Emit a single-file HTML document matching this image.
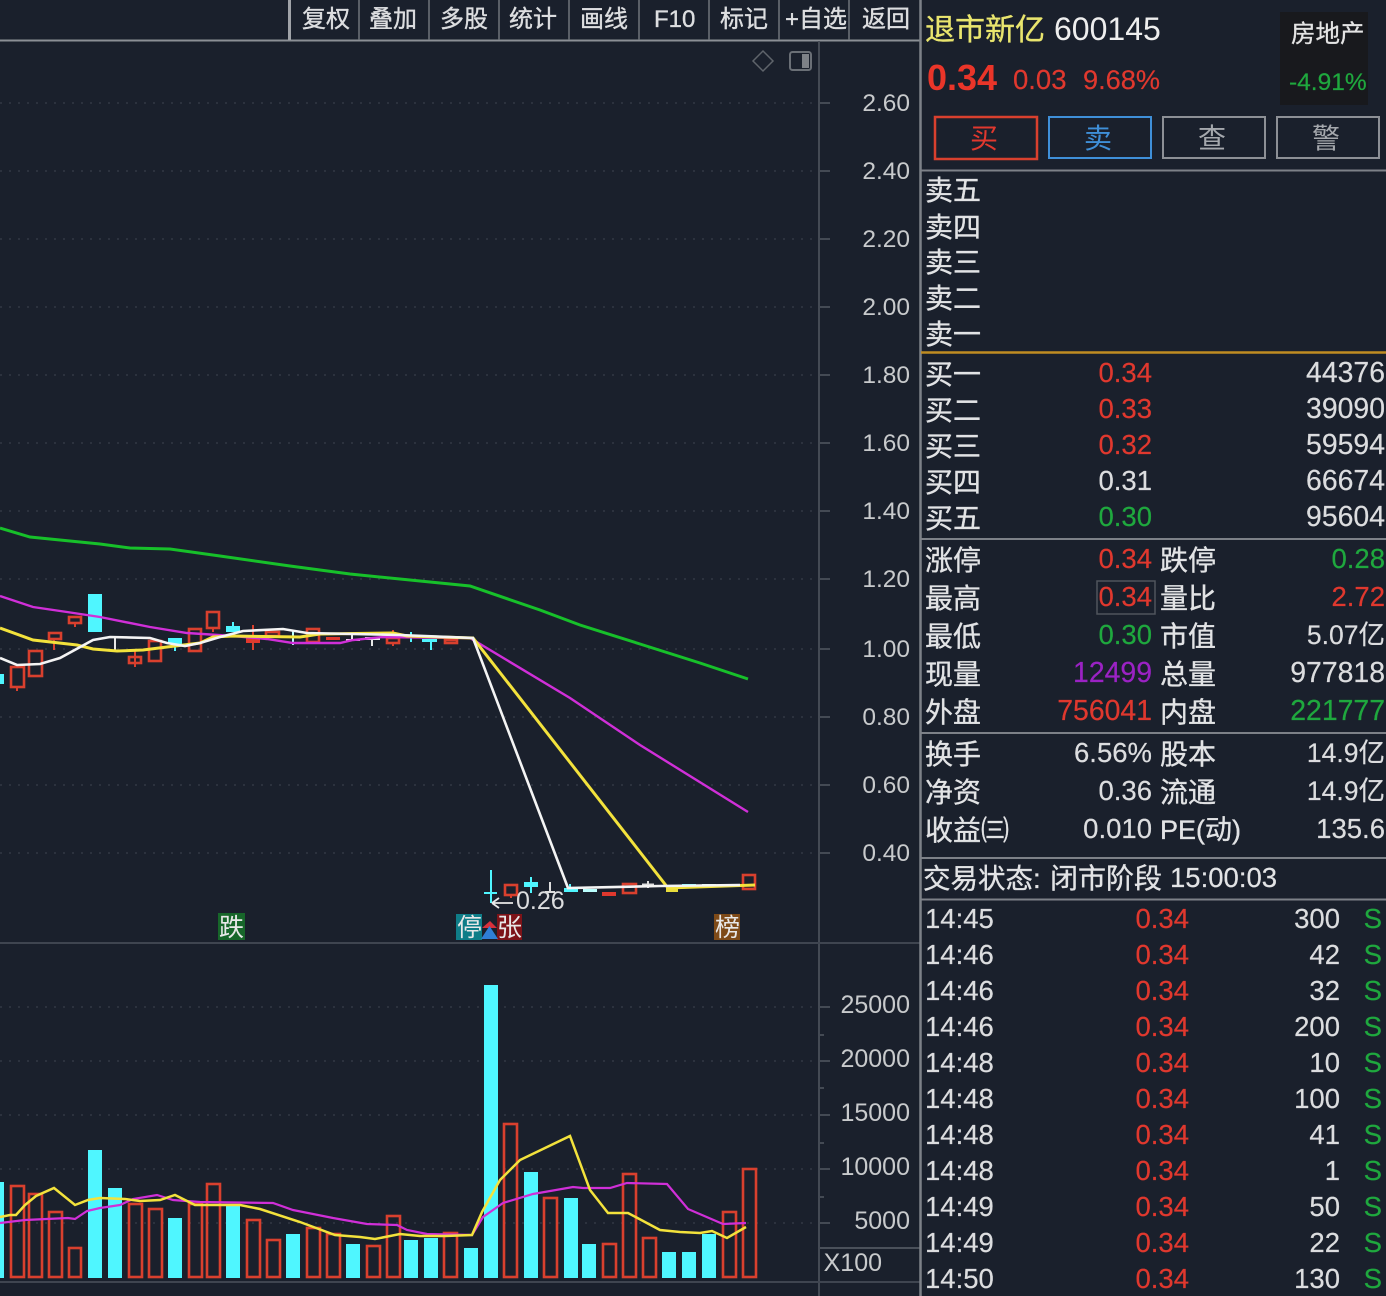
<!DOCTYPE html>
<html><head><meta charset="utf-8">
<style>
html,body{margin:0;padding:0;background:#1a202c;width:1386px;height:1296px;overflow:hidden}
svg{display:block}
text{font-family:"Liberation Sans","Noto Sans CJK SC",sans-serif;fill:#dcdddf}
.t{font-size:24px;stroke:#e4e5e7;stroke-width:.35}
.ax{font-size:24.5px;fill:#c8cacc;text-anchor:end}
.l{font-size:28px;fill:#e2e3e5;stroke:#e2e3e5;stroke-width:.35}
.n{font-size:27.5px;text-anchor:end;fill:#dcdddf;stroke:#dcdddf;stroke-width:.2}
.w{font-size:28.4px}
.r{fill:#e0382e;stroke:#e0382e;stroke-width:.2}
.g{fill:#1fa83e;stroke:#1fa83e;stroke-width:.2}
.c{text-anchor:middle}
.grid{stroke:#333944;stroke-width:1.5;stroke-dasharray:2 7;fill:none}
.tick{stroke:#444a54;stroke-width:2;fill:none}
.vr{fill:none;stroke:#d9402e;stroke-width:2.6}
.vc{fill:#4ff6ff}
.cr{fill:none;stroke:#d9402e;stroke-width:2.6}
.wk{stroke:#d9402e;stroke-width:2}
.wc{stroke:#4ff6ff;stroke-width:2}
.ww{stroke:#e8e8e8;stroke-width:2}
</style></head>
<body>
<svg width="1386" height="1296" viewBox="0 0 1386 1296" xmlns="http://www.w3.org/2000/svg">
<rect width="1386" height="1296" fill="#1a202c"/>

<!-- toolbar -->
<path d="M0 40.500H920" stroke="#8b8f95" stroke-width="2"/>
<path d="M289.500 0V40" stroke="#a0a3a8" stroke-width="3"/>
<path d="M359 0V40M429 0V40M499 0V40M569 0V40M639 0V40M709 0V40M779 0V40M849 0V40" stroke="#6f747b" stroke-width="1.500"/>
<text class="t" x="302" y="27">复权</text>
<text class="t" x="369" y="27">叠加</text>
<text class="t" x="440" y="27">多股</text>
<text class="t" x="509" y="27">统计</text>
<text class="t" x="580" y="27">画线</text>
<text class="t" x="654" y="27">F10</text>
<text class="t" x="720" y="27">标记</text>
<text class="t" x="785" y="27">+自选</text>
<text class="t" x="862" y="27">返回</text>

<!-- chart icons -->
<path d="M763 51L773 61L763 71L753 61Z" fill="none" stroke="#5f646b" stroke-width="1.500"/>
<rect x="790" y="52" width="21" height="18" rx="2.500" fill="none" stroke="#6a6f76" stroke-width="2"/>
<rect x="802" y="54" width="7" height="14" fill="#7d8187"/>

<!-- axis frame -->
<path d="M819 41V1296" stroke="#444a54" stroke-width="2"/>
<path d="M0 943H920" stroke="#3f4550" stroke-width="2"/>
<path d="M0 1282H920" stroke="#3f4550" stroke-width="2"/>
<path d="M820 1248H920" stroke="#4a505a" stroke-width="2"/>
<path d="M920.500 0V1296" stroke="#7d8188" stroke-width="2.500"/>

<!-- price grid -->
<path class="grid" d="M0 103H818M0 171H818M0 239H818M0 307H818M0 375H818M0 443H818M0 511H818M0 579H818M0 649H818M0 717H818M0 785H818M0 853H818"/>
<path class="tick" d="M820 103H830M820 171H830M820 239H830M820 307H830M820 375H830M820 443H830M820 511H830M820 579H830M820 649H830M820 717H830M820 785H830M820 853H830"/>
<text class="ax" x="910" y="111">2.60</text>
<text class="ax" x="910" y="179">2.40</text>
<text class="ax" x="910" y="247">2.20</text>
<text class="ax" x="910" y="315">2.00</text>
<text class="ax" x="910" y="383">1.80</text>
<text class="ax" x="910" y="451">1.60</text>
<text class="ax" x="910" y="519">1.40</text>
<text class="ax" x="910" y="587">1.20</text>
<text class="ax" x="910" y="657">1.00</text>
<text class="ax" x="910" y="725">0.80</text>
<text class="ax" x="910" y="793">0.60</text>
<text class="ax" x="910" y="861">0.40</text>

<!-- candles -->
<rect x="0" y="674" width="4" height="10" class="vc"/>
<rect x="11" y="667" width="13" height="20" class="cr"/><path class="wk" d="M17 687V691"/>
<rect x="29" y="651" width="13" height="25" class="cr"/>
<rect x="49" y="633" width="12" height="6" class="cr"/><path class="wk" d="M54 639V650"/>
<rect x="69" y="617" width="12" height="6" class="cr"/><path class="wk" d="M75 623V627"/>
<rect x="88" y="594" width="14" height="38" class="vc"/>
<path class="ww" d="M115 637V650"/>
<rect x="129" y="657" width="12" height="6" class="cr"/><path class="wk" d="M135 649V667"/>
<rect x="149" y="641" width="12" height="20" class="cr"/>
<rect x="168" y="638" width="14" height="6" class="vc"/><path class="wc" d="M175 644V651"/>
<rect x="189" y="629" width="12" height="22" class="cr"/>
<rect x="207" y="612" width="12" height="16" class="cr"/><path class="wk" d="M213 628V632"/>
<rect x="226" y="626" width="14" height="6" class="vc"/><path class="wc" d="M233 622V626"/>
<rect x="246" y="637" width="14" height="6" fill="#e0382e"/><path class="wk" d="M253 625V650"/>
<rect x="266" y="632" width="13" height="4" class="cr"/>
<path d="M293 630V645" stroke="#bff" stroke-width="2"/>
<rect x="307" y="629" width="12" height="13" class="cr"/>
<rect x="326" y="637" width="14" height="3" fill="#e0382e"/>
<rect x="346" y="639" width="14" height="2" fill="#f0c8f0"/><path class="ww" d="M352 635V640"/>
<rect x="365" y="637" width="15" height="3" fill="#eee"/><path class="ww" d="M372 640V646"/>
<rect x="387" y="638" width="12" height="5" class="cr"/><path class="wk" d="M393 643V646M393 630V638"/>
<path class="wc" d="M411 632V642"/>
<rect x="422" y="639" width="15" height="3" class="vc"/><path class="wc" d="M431 642V650"/>
<rect x="445" y="640" width="12" height="3" class="cr"/>

<rect x="505" y="885" width="12" height="10" class="cr"/><path class="wk" d="M511 895V898"/>
<rect x="524" y="882" width="14" height="5" class="vc"/><path class="wc" d="M531 877V893"/>
<path d="M491 870V903M484 893H497" stroke="#4ff6ff" stroke-width="2" fill="none"/>
<path d="M550 882V893M545 892H555" stroke="#ddd" stroke-width="2" fill="none"/>
<rect x="564" y="888" width="14" height="4" class="vc"/><path class="wc" d="M570 884V892"/>
<rect x="583" y="889" width="14" height="3" fill="#bff"/>
<rect x="602" y="892" width="14" height="4" fill="#e0382e"/>
<rect x="623" y="884" width="13" height="9" class="cr"/>
<path d="M642 884.500H654M648 881V888" stroke="#ddd" stroke-width="2" fill="none"/>
<rect x="666" y="888" width="12" height="4" fill="#e8dc3c"/>
<rect x="682" y="884" width="14" height="4" class="vc"/>
<rect x="702" y="884" width="14" height="3" fill="#bff"/>
<rect x="722" y="884" width="14" height="3" fill="#e0382e"/>
<rect x="743" y="875" width="12" height="14" class="cr"/>
<path d="M739 885H749" stroke="#eee" stroke-width="2"/>

<!-- price MAs -->
<polyline fill="none" stroke="#17c02a" stroke-width="3" points="0,528 30,537 100,544 130,548 170,549 220,556 290,566 350,574 410,580 470,586 540,610 580,625 640,644 700,663 748,679"/>
<polyline fill="none" stroke="#d02fd8" stroke-width="2.400" points="0,596 33,607 67,612 100,617 150,627 187,633 233,636 267,639 293,643 340,643 353,640 383,637 470,638 570,698 640,745 748,812"/>
<polyline fill="none" stroke="#f3e23c" stroke-width="3" points="0,628 33,640 77,645 93,649 117,651 143,650 167,647 200,643 213,637 233,636 300,637 320,634 393,633 407,636 473,638 668,888 755,885"/>
<polyline fill="none" stroke="#f4f4f4" stroke-width="2.600" points="0,658 17,665 40,664 60,658 93,640 110,637 150,638 167,643 185,646 200,643 220,637 243,631 283,629 307,633 400,635 473,638 568,888 660,886 740,885"/>

<!-- price annotation -->
<path d="M513 903H492M492 903L499 898M492 903L499 908" stroke="#e8e8e8" stroke-width="1.800" fill="none"/>
<text x="516" y="909" font-size="25" style="fill:#dcdddf">0.26</text>

<!-- markers -->
<rect x="218" y="913" width="27" height="27" fill="#17662a"/>
<text x="219" y="936" font-size="25" style="fill:#e8e8e8">跌</text>
<rect x="456" y="914" width="26" height="26" fill="#0f7d88"/>
<text x="457" y="936" font-size="25" style="fill:#e8e8e8">停</text>
<rect x="497" y="914" width="25" height="26" fill="#7d1318"/>
<text x="497" y="936" font-size="25" style="fill:#e8e8e8">张</text>
<path d="M490 921L497 928H482Z" fill="#d9303a"/>
<path d="M489.500 926L498 939H481Z" fill="#2f7fd6"/>
<rect x="714" y="914" width="26" height="26" fill="#7e4a18"/>
<text x="715" y="936" font-size="25" style="fill:#e8e8e8">榜</text>

<!-- volume grid -->
<path class="grid" d="M0 1007H818M0 1061H818M0 1115H818M0 1169H818M0 1223H818"/>
<path class="tick" d="M820 1007H830M820 1061H830M820 1115H830M820 1169H830M820 1223H830"/>
<path d="M820 1035H824M820 1088H824M820 1143H824M820 1197H824" stroke="#444a54" stroke-width="2"/>
<text class="ax" x="910" y="1013" style="font-size:25px">25000</text>
<text class="ax" x="910" y="1067" style="font-size:25px">20000</text>
<text class="ax" x="910" y="1121" style="font-size:25px">15000</text>
<text class="ax" x="910" y="1175" style="font-size:25px">10000</text>
<text class="ax" x="910" y="1229" style="font-size:25px">5000</text>
<text class="ax" x="882" y="1271" style="font-size:25px">X100</text>

<!-- volume bars -->
<rect class="vc" x="0" y="1182" width="4" height="96"/>
<rect class="vr" x="11" y="1186" width="13" height="91"/>
<rect class="vr" x="29" y="1194" width="13" height="83"/>
<rect class="vr" x="49" y="1212" width="13" height="65"/>
<rect class="vr" x="69" y="1248" width="12" height="29"/>
<rect class="vc" x="88" y="1150" width="14" height="128"/>
<rect class="vc" x="108" y="1188" width="14" height="90"/>
<rect class="vr" x="129" y="1204" width="13" height="73"/>
<rect class="vr" x="149" y="1209" width="13" height="68"/>
<rect class="vc" x="168" y="1218" width="14" height="60"/>
<rect class="vr" x="189" y="1204" width="13" height="73"/>
<rect class="vr" x="207" y="1184" width="13" height="93"/>
<rect class="vc" x="226" y="1205" width="14" height="73"/>
<rect class="vr" x="247" y="1220" width="13" height="57"/>
<rect class="vr" x="267" y="1240" width="13" height="37"/>
<rect class="vc" x="286" y="1234" width="14" height="44"/>
<rect class="vr" x="307" y="1228" width="13" height="49"/>
<rect class="vr" x="327" y="1234" width="13" height="43"/>
<rect class="vc" x="346" y="1244" width="14" height="34"/>
<rect class="vr" x="367" y="1246" width="13" height="31"/>
<rect class="vr" x="387" y="1216" width="13" height="61"/>
<rect class="vc" x="404" y="1240" width="14" height="38"/>
<rect class="vc" x="424" y="1238" width="14" height="40"/>
<rect class="vr" x="444" y="1233" width="13" height="44"/>
<rect class="vc" x="464" y="1248" width="14" height="30"/>
<rect class="vc" x="484" y="985" width="14" height="293"/>
<rect class="vr" x="504" y="1124" width="13" height="153"/>
<rect class="vc" x="524" y="1172" width="14" height="106"/>
<rect class="vr" x="544" y="1198" width="13" height="79"/>
<rect class="vc" x="564" y="1198" width="14" height="80"/>
<rect class="vc" x="582" y="1244" width="14" height="34"/>
<rect class="vr" x="603" y="1244" width="13" height="33"/>
<rect class="vr" x="623" y="1174" width="13" height="103"/>
<rect class="vr" x="643" y="1238" width="13" height="39"/>
<rect class="vc" x="662" y="1252" width="14" height="26"/>
<rect class="vc" x="682" y="1252" width="14" height="26"/>
<rect class="vc" x="702" y="1234" width="14" height="44"/>
<rect class="vr" x="723" y="1212" width="13" height="65"/>
<rect class="vr" x="743" y="1169" width="13" height="108"/>
<polyline fill="none" stroke="#d02fd8" stroke-width="2.200" points="0,1223 25,1220 68,1218 75,1219 87,1211 100,1208 120,1205 133,1199 157,1195 173,1200 200,1202 273,1203 293,1210 333,1218 367,1224 397,1225 407,1230 427,1234 472,1235 483,1217 503,1203 533,1194 573,1187 583,1188 610,1188 627,1183 667,1184 688,1209 723,1224 746,1223"/>
<polyline fill="none" stroke="#f3e23c" stroke-width="2.500" points="0,1217 10,1215 16,1215 25,1205 36,1196 54,1188 75,1205 88,1200 100,1198 125,1199 140,1201 160,1200 175,1195 195,1205 240,1205 260,1209 300,1222 335,1235 360,1237 375,1239 400,1234 420,1236 445,1236 472,1235 482,1212 500,1180 520,1160 545,1148 570,1136 590,1190 608,1213 628,1213 660,1230 680,1232 700,1233 712,1231 727,1238 746,1227"/>

<!-- right panel header -->
<text x="925" y="40" font-size="30" style="fill:#e9e56e;stroke:#e9e56e;stroke-width:.35">退市新亿</text>
<text x="1054" y="40" font-size="32" style="fill:#eeeeee">600145</text>
<text x="927" y="90" font-size="36" font-weight="bold" style="fill:#ea3529">0.34</text>
<text x="1013" y="89" font-size="27.500" class="r">0.03</text>
<text x="1083" y="89" font-size="27.200" class="r">9.68%</text>
<rect x="1280" y="12" width="88" height="93" fill="#18191d"/>
<text x="1291" y="42" font-size="24.500" style="fill:#e4e4e4;stroke:#e4e4e4;stroke-width:.3">房地产</text>
<text x="1289" y="90" font-size="24.500" class="g">-4.91%</text>

<rect x="935" y="117" width="102" height="42" fill="none" stroke="#d9402e" stroke-width="2.500"/>
<rect x="1049" y="117" width="102" height="41" fill="none" stroke="#3f8fd8" stroke-width="2"/>
<rect x="1163" y="117" width="102" height="41" fill="none" stroke="#8d9096" stroke-width="2"/>
<rect x="1277" y="117" width="102" height="41" fill="none" stroke="#8d9096" stroke-width="2"/>
<text x="984" y="148" font-size="28" class="c" style="fill:#e0382e">买</text>
<text x="1098" y="148" font-size="28" class="c" style="fill:#3f8fd8">卖</text>
<text x="1212" y="148" font-size="28" class="c" style="fill:#a5a8ad">查</text>
<text x="1326" y="148" font-size="28" class="c" style="fill:#a5a8ad">警</text>

<path d="M921 170.500H1386M921 539H1386M921 733H1386M921 858H1386M921 899.500H1386" stroke="#7d8188" stroke-width="2"/>
<path d="M921 352.500H1386" stroke="#c08c22" stroke-width="2.500"/>

<!-- sell -->
<text class="l" x="925" y="200">卖五</text>
<text class="l" x="925" y="237">卖四</text>
<text class="l" x="925" y="272">卖三</text>
<text class="l" x="925" y="308">卖二</text>
<text class="l" x="925" y="344">卖一</text>

<!-- buy -->
<text class="l" x="925" y="384">买一</text><text class="n r" x="1152" y="382">0.34</text><text class="n w" x="1385" y="382">44376</text>
<text class="l" x="925" y="420">买二</text><text class="n r" x="1152" y="418">0.33</text><text class="n w" x="1385" y="418">39090</text>
<text class="l" x="925" y="456">买三</text><text class="n r" x="1152" y="454">0.32</text><text class="n w" x="1385" y="454">59594</text>
<text class="l" x="925" y="492">买四</text><text class="n" x="1152" y="490">0.31</text><text class="n w" x="1385" y="490">66674</text>
<text class="l" x="925" y="528">买五</text><text class="n g" x="1152" y="526">0.30</text><text class="n w" x="1385" y="526">95604</text>

<!-- stats -->
<text class="l" x="925" y="570">涨停</text><text class="n r" x="1152" y="568">0.34</text><text class="l" x="1160" y="570">跌停</text><text class="n g" x="1385" y="568">0.28</text>
<rect x="1097" y="581" width="58" height="33" fill="none" stroke="#4f545c" stroke-width="1.500"/>
<text class="l" x="925" y="608">最高</text><text class="n r" x="1152" y="606">0.34</text><text class="l" x="1160" y="608">量比</text><text class="n r" x="1385" y="606">2.72</text>
<text class="l" x="925" y="646">最低</text><text class="n g" x="1152" y="644">0.30</text><text class="l" x="1160" y="646">市值</text><text class="n" x="1385" y="644" style="font-size:26.500px">5.07亿</text>
<text class="l" x="925" y="684">现量</text><text class="n w" x="1152" y="682" style="fill:#9b22c4;stroke:#9b22c4">12499</text><text class="l" x="1160" y="684">总量</text><text class="n w" x="1385" y="682">977818</text>
<text class="l" x="925" y="722">外盘</text><text class="n r w" x="1152" y="720">756041</text><text class="l" x="1160" y="722">内盘</text><text class="n g w" x="1385" y="720">221777</text>

<text class="l" x="925" y="764">换手</text><text class="n" x="1152" y="762">6.56%</text><text class="l" x="1160" y="764">股本</text><text class="n" x="1385" y="762" style="font-size:26.500px">14.9亿</text>
<text class="l" x="925" y="802">净资</text><text class="n" x="1152" y="800">0.36</text><text class="l" x="1160" y="802">流通</text><text class="n" x="1385" y="800" style="font-size:26.500px">14.9亿</text>
<text class="l" x="925" y="840">收益㈢</text><text class="n" x="1152" y="838">0.010</text><text class="l" x="1160" y="839" style="font-size:27px">PE(动)</text><text class="n" x="1385" y="838">135.6</text>

<text class="l" x="923" y="888" style="font-size:27.500px">交易状态:</text>
<text class="l" x="1050" y="888">闭市阶段</text>
<text class="l" x="1170" y="887" style="font-size:27.500px;stroke-width:.2">15:00:03</text>

<!-- trades -->
<g>
<text class="n" style="text-anchor:start" x="925" y="928">14:45</text><text class="n r" x="1189" y="928">0.34</text><text class="n" x="1340" y="928">300</text><text class="n g" x="1382" y="928">S</text>
<text class="n" style="text-anchor:start" x="925" y="964">14:46</text><text class="n r" x="1189" y="964">0.34</text><text class="n" x="1340" y="964">42</text><text class="n g" x="1382" y="964">S</text>
<text class="n" style="text-anchor:start" x="925" y="1000">14:46</text><text class="n r" x="1189" y="1000">0.34</text><text class="n" x="1340" y="1000">32</text><text class="n g" x="1382" y="1000">S</text>
<text class="n" style="text-anchor:start" x="925" y="1036">14:46</text><text class="n r" x="1189" y="1036">0.34</text><text class="n" x="1340" y="1036">200</text><text class="n g" x="1382" y="1036">S</text>
<text class="n" style="text-anchor:start" x="925" y="1072">14:48</text><text class="n r" x="1189" y="1072">0.34</text><text class="n" x="1340" y="1072">10</text><text class="n g" x="1382" y="1072">S</text>
<text class="n" style="text-anchor:start" x="925" y="1108">14:48</text><text class="n r" x="1189" y="1108">0.34</text><text class="n" x="1340" y="1108">100</text><text class="n g" x="1382" y="1108">S</text>
<text class="n" style="text-anchor:start" x="925" y="1144">14:48</text><text class="n r" x="1189" y="1144">0.34</text><text class="n" x="1340" y="1144">41</text><text class="n g" x="1382" y="1144">S</text>
<text class="n" style="text-anchor:start" x="925" y="1180">14:48</text><text class="n r" x="1189" y="1180">0.34</text><text class="n" x="1340" y="1180">1</text><text class="n g" x="1382" y="1180">S</text>
<text class="n" style="text-anchor:start" x="925" y="1216">14:49</text><text class="n r" x="1189" y="1216">0.34</text><text class="n" x="1340" y="1216">50</text><text class="n g" x="1382" y="1216">S</text>
<text class="n" style="text-anchor:start" x="925" y="1252">14:49</text><text class="n r" x="1189" y="1252">0.34</text><text class="n" x="1340" y="1252">22</text><text class="n g" x="1382" y="1252">S</text>
<text class="n" style="text-anchor:start" x="925" y="1288">14:50</text><text class="n r" x="1189" y="1288">0.34</text><text class="n" x="1340" y="1288">130</text><text class="n g" x="1382" y="1288">S</text>
</g>
</svg>
</body></html>
